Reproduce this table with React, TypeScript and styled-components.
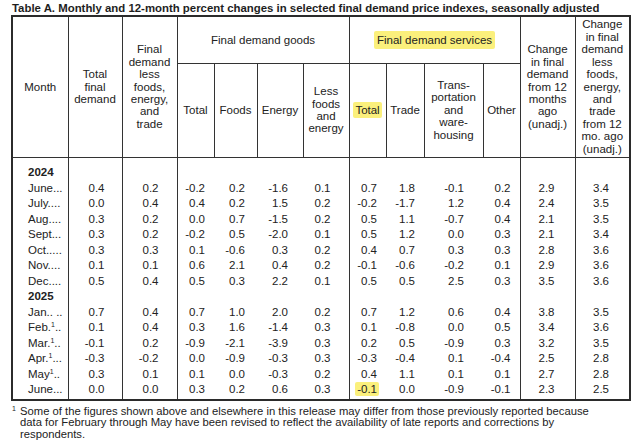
import React from "react";
import styled, { createGlobalStyle } from "styled-components";

const GlobalStyle = createGlobalStyle`
  html, body { margin: 0; padding: 0; background: #ffffff; }
  body { font-family: "Liberation Sans", Arial, Helvetica, sans-serif; color: #1e1e1e; }
`;

const Page = styled.div`
  width: 636px;
  height: 440px;
  box-sizing: border-box;
  padding: 2px 7px 0 11px;
  overflow: hidden;
`;

const Title = styled.div`
  font-weight: bold;
  font-size: 11.4px;
  line-height: 13px;
  margin-left: 1px;
  white-space: nowrap;
`;

const Table = styled.table`
  width: 618px;
  table-layout: fixed;
  border-collapse: collapse;
  border: 2px solid #2b2b2b;
  font-size: 11.5px;
`;

const Col = styled.col<{ $w: number }>`
  width: ${(p) => p.$w}px;
`;

const HeadRow = styled.tr<{ $h: number }>`
  height: ${(p) => p.$h}px;
`;

const HeadCell = styled.th`
  border: 1px solid #333333;
  font-weight: normal;
  text-align: center;
  vertical-align: middle;
  padding: 0;
  line-height: 12.45px;
  color: #222222;
`;

const BodyRow = styled.tr<{ $h?: number }>`
  height: ${(p) => p.$h ?? 15.5}px;
`;

const BodyCell = styled.td<{ $start?: boolean; $pr?: number }>`
  border-left: ${(p) => (p.$start ? "1px solid #333333" : "none")};
  padding: 0 ${(p) => p.$pr ?? 0}px 0 0;
  text-align: right;
  line-height: 15.5px;
  white-space: nowrap;
  color: #222222;
`;

const MonthCell = styled.td<{ $bold?: boolean }>`
  padding: 0 0 0 15px;
  text-align: left;
  line-height: 15.5px;
  white-space: nowrap;
  overflow: hidden;
  font-weight: ${(p) => (p.$bold ? "bold" : "normal")};
  color: #222222;
`;

const Sup = styled.sup`
  font-size: 7px;
  line-height: 0;
  vertical-align: 4px;
`;

const Mark = styled.span<{ $px: number; $py: number }>`
  background: #fbf07c;
  padding: ${(p) => p.$py}px ${(p) => p.$px}px;
  margin: 0 -${(p) => p.$px}px;
  border-radius: 2px;
  box-decoration-break: clone;
`;

const Footnote = styled.div`
  display: flex;
  margin-top: 5px;
  margin-left: 1px;
  font-size: 11.25px;
  line-height: 11.5px;
  color: #222222;
`;

const FootSup = styled.span`
  font-size: 7px;
  line-height: 7px;
  width: 8px;
  flex: none;
  margin-top: -1px;
`;

const FootText = styled.div`
  white-space: nowrap;
`;

const widths = [56, 54, 55, 37, 43, 46, 46, 37, 38, 59, 37, 55, 55];
const pads = [17, 18, 9, 12, 15, 18, 9, 9, 19, 9, 20, 20];
const starts = [true, true, true, false, false, false, true, false, false, false, true, true];

type Row = { label: React.ReactNode; v: string[]; mark?: number };

const y2024: Row[] = [
  { label: "June...", v: ["0.4", "0.2", "-0.2", "0.2", "-1.6", "0.1", "0.7", "1.8", "-0.1", "0.2", "2.9", "3.4"] },
  { label: "July....", v: ["0.0", "0.4", "0.4", "0.2", "1.5", "0.2", "-0.2", "-1.7", "1.2", "0.4", "2.4", "3.5"] },
  { label: "Aug....", v: ["0.3", "0.2", "0.0", "0.7", "-1.5", "0.2", "0.5", "1.1", "-0.7", "0.4", "2.1", "3.5"] },
  { label: "Sept...", v: ["0.3", "0.2", "-0.2", "0.5", "-2.0", "0.1", "0.5", "1.2", "0.0", "0.3", "2.1", "3.4"] },
  { label: "Oct.....", v: ["0.3", "0.3", "0.1", "-0.6", "0.3", "0.2", "0.4", "0.7", "0.3", "0.3", "2.8", "3.6"] },
  { label: "Nov....", v: ["0.1", "0.1", "0.6", "2.1", "0.4", "0.2", "-0.1", "-0.6", "-0.2", "0.1", "2.9", "3.6"] },
  { label: "Dec....", v: ["0.5", "0.4", "0.5", "0.3", "2.2", "0.1", "0.5", "0.5", "2.5", "0.3", "3.5", "3.6"] },
];

const y2025: Row[] = [
  { label: "Jan.. ..", v: ["0.7", "0.4", "0.7", "1.0", "2.0", "0.2", "0.7", "1.2", "0.6", "0.4", "3.8", "3.5"] },
  { label: <>Feb.<Sup>1</Sup>..</>, v: ["0.1", "0.4", "0.3", "1.6", "-1.4", "0.3", "0.1", "-0.8", "0.0", "0.5", "3.4", "3.6"] },
  { label: <>Mar.<Sup>1</Sup>..</>, v: ["-0.1", "0.2", "-0.9", "-2.1", "-3.9", "0.3", "0.2", "0.5", "-0.9", "0.3", "3.2", "3.5"] },
  { label: <>Apr.<Sup>1</Sup>...</>, v: ["-0.3", "-0.2", "0.0", "-0.9", "-0.3", "0.3", "-0.3", "-0.4", "0.1", "-0.4", "2.5", "2.8"] },
  { label: <>May<Sup>1</Sup>..</>, v: ["0.3", "0.1", "0.1", "0.0", "-0.3", "0.2", "0.4", "1.1", "0.1", "0.1", "2.7", "2.8"] },
  { label: "June...", v: ["0.0", "0.0", "0.3", "0.2", "0.6", "0.3", "-0.1", "0.0", "-0.9", "-0.1", "2.3", "2.5"], mark: 6 },
];

function EmptyCells() {
  return (
    <>
      {pads.map((_, i) => (
        <BodyCell key={i} $start={starts[i]} />
      ))}
    </>
  );
}

function DataRow({ row }: { row: Row }) {
  return (
    <BodyRow>
      <MonthCell>{row.label}</MonthCell>
      {row.v.map((val, i) => (
        <BodyCell key={i} $start={starts[i]} $pr={pads[i]}>
          {row.mark === i ? <Mark $px={2} $py={1}>{val}</Mark> : val}
        </BodyCell>
      ))}
    </BodyRow>
  );
}

export default function App() {
  return (
    <>
      <GlobalStyle />
      <Page>
        <Title>
          Table A. Monthly and 12-month percent changes in selected final demand price indexes, seasonally adjusted
        </Title>
        <Table>
          <colgroup>
            {widths.map((w, i) => (
              <Col key={i} $w={w} />
            ))}
          </colgroup>
          <thead>
            <HeadRow $h={47}>
              <HeadCell rowSpan={2}>Month</HeadCell>
              <HeadCell rowSpan={2}>Total<br />final<br />demand</HeadCell>
              <HeadCell rowSpan={2}>Final<br />demand<br />less<br />foods,<br />energy,<br />and<br />trade</HeadCell>
              <HeadCell colSpan={4}>Final demand goods</HeadCell>
              <HeadCell colSpan={4}>
                <Mark $px={3} $py={3}>Final demand services</Mark>
              </HeadCell>
              <HeadCell rowSpan={2}>Change<br />in final<br />demand<br />from 12<br />months<br />ago<br />(unadj.)</HeadCell>
              <HeadCell rowSpan={2}>Change<br />in final<br />demand<br />less<br />foods,<br />energy,<br />and<br />trade<br />from 12<br />mo. ago<br />(unadj.)</HeadCell>
            </HeadRow>
            <HeadRow $h={94}>
              <HeadCell>Total</HeadCell>
              <HeadCell>Foods</HeadCell>
              <HeadCell>Energy</HeadCell>
              <HeadCell>Less<br />foods<br />and<br />energy</HeadCell>
              <HeadCell>
                <Mark $px={2} $py={2}>Total</Mark>
              </HeadCell>
              <HeadCell>Trade</HeadCell>
              <HeadCell>Trans-<br />portation<br />and<br />ware-<br />housing</HeadCell>
              <HeadCell>Other</HeadCell>
            </HeadRow>
          </thead>
          <tbody>
            <BodyRow $h={8}>
              <MonthCell />
              <EmptyCells />
            </BodyRow>
            <BodyRow>
              <MonthCell $bold>2024</MonthCell>
              <EmptyCells />
            </BodyRow>
            {y2024.map((r, i) => (
              <DataRow key={"a" + i} row={r} />
            ))}
            <BodyRow>
              <MonthCell $bold>2025</MonthCell>
              <EmptyCells />
            </BodyRow>
            {y2025.map((r, i) => (
              <DataRow key={"b" + i} row={r} />
            ))}
            <BodyRow $h={2}>
              <MonthCell />
              <EmptyCells />
            </BodyRow>
          </tbody>
        </Table>
        <Footnote>
          <FootSup>1</FootSup>
          <FootText>
            Some of the figures shown above and elsewhere in this release may differ from those previously reported because
            <br />
            data for February through May have been revised to reflect the availability of late reports and corrections by
            <br />
            respondents.
          </FootText>
        </Footnote>
      </Page>
    </>
  );
}
